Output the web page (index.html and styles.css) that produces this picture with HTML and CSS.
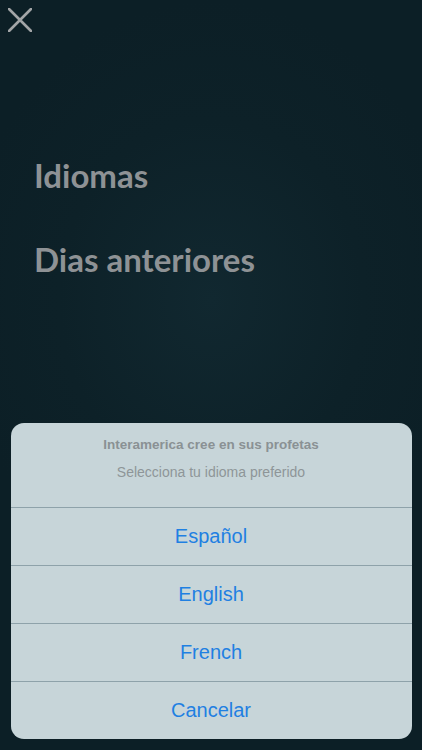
FILE: index.html
```html
<!DOCTYPE html>
<html lang="es">
<head>
<meta charset="utf-8">
<title>Idiomas</title>
<link rel="stylesheet" href="styles.css">
</head>
<body>
<div class="screen">
  <button class="close" aria-label="Cerrar">
    <svg viewBox="0 0 24 24" width="24" height="24"><path d="M1 1 L23 23 M23 1 L1 23" stroke="#a2a5a7" stroke-width="2.6" stroke-linecap="round" fill="none"/></svg>
  </button>
  <nav class="menu">
    <div class="menu-item">Idiomas</div>
    <div class="menu-item">Dias anteriores</div>
  </nav>
  <div class="sheet">
    <div class="sheet-header">
      <div class="sheet-title">Interamerica cree en sus profetas</div>
      <div class="sheet-sub">Selecciona tu idioma preferido</div>
    </div>
    <div class="sheet-btn">Español</div>
    <div class="sheet-btn">English</div>
    <div class="sheet-btn">French</div>
    <div class="sheet-btn">Cancelar</div>
  </div>
</div>
</body>
</html>
```
FILE: styles.css
```css
html, body {
  margin: 0;
  padding: 0;
}
body {
  background: #0d2027;
}
.screen {
  width: 422px;
  height: 750px;
  display: flex;
  flex-direction: column;
  background: radial-gradient(ellipse 60% 40% at 50% 40%, #112830 0%, #0d2128 60%, #0c1f26 100%);
  overflow: hidden;
}
.close {
  background: none;
  border: 0;
  padding: 0;
  margin: 8px 0 0 8px;
  width: 24px;
  height: 24px;
  display: block;
}
.close svg { display: block; }
.menu {
  display: flex;
  flex-direction: column;
  padding: 124px 0 0 34px;
  gap: 46px;
}
.menu-item {
  font-family: Lato, "Noto Sans", sans-serif;
  font-weight: 700;
  font-size: 33px;
  line-height: 38px;
  color: #8e9295;
}
.sheet {
  margin: auto 10.5px 11px;
  background: #c7d5d9;
  border-radius: 13px;
  overflow: hidden;
  font-family: "Liberation Sans", Arial, sans-serif;
  text-align: center;
}
.sheet-header {
  height: 84px;
  box-sizing: border-box;
  padding-top: 13px;
}
.sheet-title {
  font-size: 13.5px;
  font-weight: 700;
  line-height: 17px;
  color: #8a9194;
}
.sheet-sub {
  margin-top: 11px;
  font-size: 14px;
  line-height: 17px;
  color: #8e9598;
}
.sheet-btn {
  height: 57px;
  border-top: 1px solid #8ea2aa;
  display: flex;
  align-items: center;
  justify-content: center;
  font-size: 20px;
  color: #1f80e2;
}
```
